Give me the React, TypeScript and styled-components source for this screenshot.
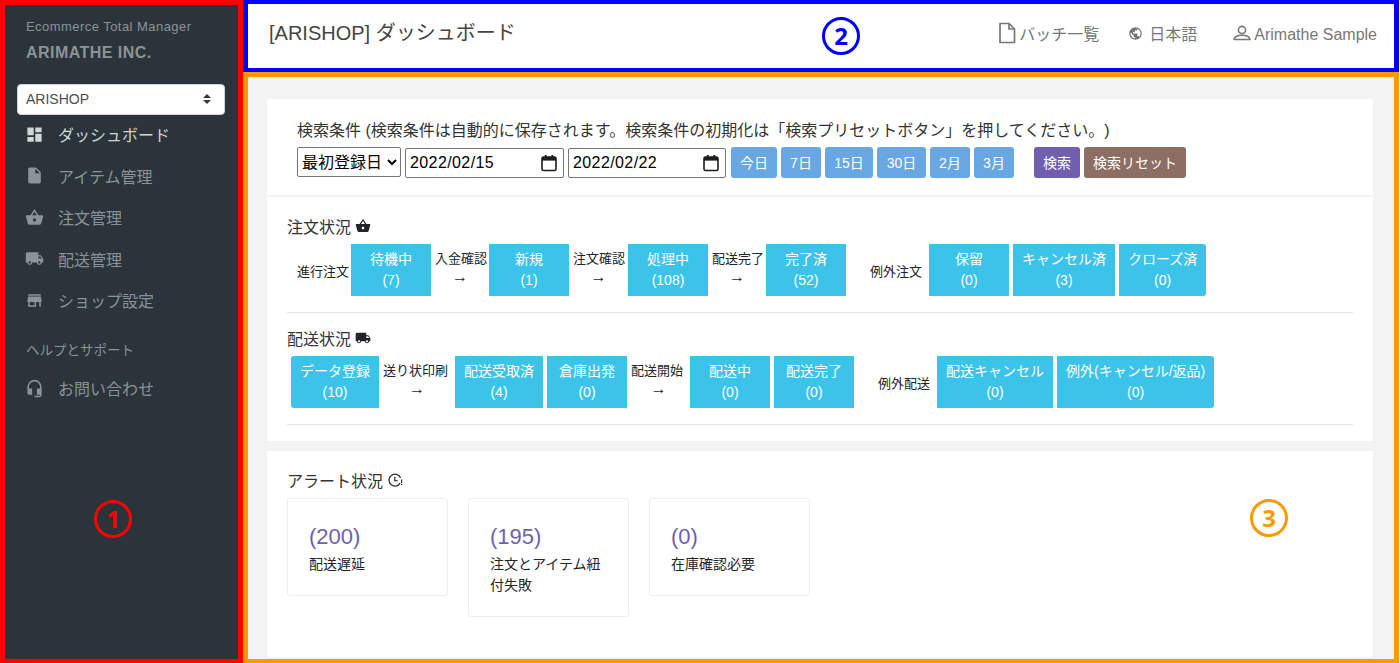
import styled, { createGlobalStyle } from 'styled-components';
import {
  MdDashboard,
  MdInsertDriveFile,
  MdShoppingBasket,
  MdLocalShipping,
  MdStore,
  MdHeadsetMic,
  MdPublic,
} from 'react-icons/md';

const FONT = `"Liberation Sans", "Noto Sans CJK JP", sans-serif`;

const GlobalStyle = createGlobalStyle`
  html, body {
    margin: 0;
    padding: 0;
    background: #fff;
    overflow: hidden;
  }
  * {
    box-sizing: border-box;
    text-spacing-trim: space-all;
  }
  body {
    font-family: ${FONT};
  }
`;

const navItems = [
  { label: 'ダッシュボード', icon: <MdDashboard />, active: true },
  { label: 'アイテム管理', icon: <MdInsertDriveFile /> },
  { label: '注文管理', icon: <MdShoppingBasket /> },
  { label: '配送管理', icon: <MdLocalShipping /> },
  { label: 'ショップ設定', icon: <MdStore /> },
];

const quickRanges = [
  { label: '今日', width: 46 },
  { label: '7日', width: 40 },
  { label: '15日', width: 48 },
  { label: '30日', width: 49 },
  { label: '2月', width: 40 },
  { label: '3月', width: 40 },
];

const alerts = [
  { count: 200, label: '配送遅延' },
  { count: 195, label: '注文とアイテム紐付失敗' },
  { count: 0, label: '在庫確認必要' },
];

const CalendarIcon = () => (
  <svg width="18" height="18" viewBox="0 0 18 18" fill="none">
    <rect x="2" y="3" width="14" height="13.5" rx="1.6" stroke="#1c1c1c" strokeWidth="1.6" />
    <rect x="2" y="3" width="14" height="3.6" fill="#1c1c1c" />
    <rect x="4.8" y="1" width="1.8" height="3" fill="#1c1c1c" />
    <rect x="11.4" y="1" width="1.8" height="3" fill="#1c1c1c" />
  </svg>
);

const SelectArrows = () => (
  <svg width="10" height="12" viewBox="0 0 10 12">
    <path d="M5 1 L9 5 H1 Z M5 11 L1 7 H9 Z" fill="#343a40" />
  </svg>
);

const FileOutline = () => (
  <svg width="18" height="22" viewBox="0 0 18 22" fill="none">
    <path d="M2 1.5 H11 L16.5 7 V20.5 H2 Z" stroke="#777" strokeWidth="1.7" strokeLinejoin="round" />
    <path d="M11 1.5 V7 H16.5" stroke="#777" strokeWidth="1.7" strokeLinejoin="round" />
  </svg>
);

const UserOutline = () => (
  <svg width="18" height="16" viewBox="0 0 18 16" fill="none">
    <circle cx="9" cy="5" r="3.6" stroke="#777" strokeWidth="1.6" />
    <path d="M1 14.5 C1.5 11.2 5 10.2 9 10.2 C13 10.2 16.5 11.2 17 14.5 Z" stroke="#777" strokeWidth="1.6" strokeLinejoin="round" />
  </svg>
);

const ClockAlert = () => (
  <svg width="15" height="15" viewBox="0 0 15 15" fill="none">
    <path d="M12.2 10.2 A6 6 0 1 1 12.6 5" stroke="#333" strokeWidth="1.3" />
    <path d="M6.8 4 V7.6 H9.6" stroke="#333" strokeWidth="1.3" />
    <rect x="13" y="6.5" width="1.2" height="3.6" fill="#333" />
    <rect x="13" y="11" width="1.2" height="1.3" fill="#333" />
  </svg>
);

const App = () => {
  return (
    <Page>
      <GlobalStyle />
      <Sidebar>
        <BrandSub>Ecommerce Total Manager</BrandSub>
        <BrandName>ARIMATHE INC.</BrandName>
        <ShopSelect>
          <span>ARISHOP</span>
          <SelectArrows />
        </ShopSelect>
        <NavList>
          {navItems.map((item) => (
            <NavItem key={item.label} $active={item.active}>
              {item.icon}
              {item.label}
            </NavItem>
          ))}
        </NavList>
        <NavCaption>ヘルプとサポート</NavCaption>
        <NavItem>
          <MdHeadsetMic />
          お問い合わせ
        </NavItem>
        <Marker $color="#ff0000" $left="89px" $top="495px">
          1
        </Marker>
      </Sidebar>
      <Content>
        <Header>
          <PageTitle>[ARISHOP] ダッシュボード</PageTitle>
          <HeaderLinks>
            <HeaderLink $gap={3} $after={29}>
              <FileOutline />
              バッチ一覧
            </HeaderLink>
            <HeaderLink $gap={6} $after={36}>
              <MdPublic size={15} />
              日本語
            </HeaderLink>
            <HeaderLink $gap={3}>
              <UserOutline />
              <UserName>Arimathe Sample</UserName>
            </HeaderLink>
          </HeaderLinks>
          <Marker $color="#0000ff" $left="574px" $top="13px">
            2
          </Marker>
        </Header>
        <Main>
          <SearchCard>
            <SearchNote>
              検索条件 (検索条件は自動的に保存されます。検索条件の初期化は「検索プリセットボタン」を押してください。)
            </SearchNote>
            <SearchRow>
              <DateType defaultValue="created">
                <option value="created">最初登録日</option>
              </DateType>
              <DateBox $width={159}>
                2022/02/15
                <CalendarIcon />
              </DateBox>
              <DateBox $width={158}>
                2022/02/22
                <CalendarIcon />
              </DateBox>
              <RangeButtons>
                {quickRanges.map((range) => (
                  <SmallButton key={range.label} $bg="#69a7e3" $width={range.width}>
                    {range.label}
                  </SmallButton>
                ))}
              </RangeButtons>
              <ActionButtons>
                <SmallButton $bg="#6f5fae" $width={46}>
                  検索
                </SmallButton>
                <SmallButton $bg="#8d6e63" $width={102}>
                  検索リセット
                </SmallButton>
              </ActionButtons>
            </SearchRow>
          </SearchCard>
          <StatusCard>
            <StatusTitle>
              注文状況 <MdShoppingBasket size={16} color="#212529" />
            </StatusTitle>
            <StatusRow $indent={10}>
              <RowLabel>進行注文</RowLabel>
              <StatusButton name="待機中" count={7} />
              <StepLabel $w={50}>
                入金確認<Arrow>→</Arrow>
              </StepLabel>
              <StatusButton name="新規" count={1} />
              <StepLabel $w={51}>
                注文確認<Arrow>→</Arrow>
              </StepLabel>
              <StatusButton name="処理中" count={108} />
              <StepLabel $w={50}>
                配送完了<Arrow>→</Arrow>
              </StepLabel>
              <StatusButton name="完了済" count={52} />
              <ExceptionLabel>例外注文</ExceptionLabel>
              <StatusButton name="保留" count={0} />
              <StatusButton name="キャンセル済" count={3} />
              <StatusButton name="クローズ済" count={0} roundRight />
            </StatusRow>
            <Divider />
            <StatusTitle>
              配送状況 <MdLocalShipping size={16} color="#212529" />
            </StatusTitle>
            <StatusRow $indent={4}>
              <StatusButton name="データ登録" count={10} roundLeft />
              <StepLabel $w={68}>
                送り状印刷<Arrow>→</Arrow>
              </StepLabel>
              <StatusButton name="配送受取済" count={4} />
              <StatusButton name="倉庫出発" count={0} />
              <StepLabel $w={55}>
                配送開始<Arrow>→</Arrow>
              </StepLabel>
              <StatusButton name="配送中" count={0} />
              <StatusButton name="配送完了" count={0} />
              <ExceptionLabel>例外配送</ExceptionLabel>
              <StatusButton name="配送キャンセル" count={0} />
              <StatusButton name="例外(キャンセル/返品)" count={0} roundRight />
            </StatusRow>
            <Divider />
          </StatusCard>
          <AlertCard>
            <AlertTitle>
              アラート状況 <ClockAlert />
            </AlertTitle>
            <AlertList>
              {alerts.map((alert) => (
                <AlertBox key={alert.label}>
                  <AlertCount>({alert.count})</AlertCount>
                  <AlertLabel>{alert.label}</AlertLabel>
                </AlertBox>
              ))}
            </AlertList>
            <Marker $color="#ff9900" $left="983px" $top="48px">
              3
            </Marker>
          </AlertCard>
        </Main>
      </Content>
    </Page>
  );
};

const StatusButton = ({
  name,
  count,
  roundLeft,
  roundRight,
}: {
  name: string;
  count: number;
  roundLeft?: boolean;
  roundRight?: boolean;
}) => (
  <StatusBtn $roundLeft={roundLeft} $roundRight={roundRight}>
    <span>{name}</span>
    <span>({count})</span>
  </StatusBtn>
);

export default App;

const Page = styled.div`
  display: flex;
  width: 1399px;
  height: 663px;
  overflow: hidden;
`;

const Marker = styled.div<{ $color: string; $left: string; $top: string }>`
  position: absolute;
  left: ${(props) => props.$left};
  top: ${(props) => props.$top};
  width: 38px;
  height: 38px;
  display: flex;
  align-items: center;
  justify-content: center;
  border: 3.5px solid ${(props) => props.$color};
  border-radius: 50%;
  color: ${(props) => props.$color};
  font-family: 'Open Sans', sans-serif;
  font-size: 24px;
  font-weight: 700;
  line-height: 1;
`;

const Sidebar = styled.aside`
  position: relative;
  flex: 0 0 243px;
  height: 663px;
  padding: 15px 12px 0;
  background: #2a343a;
  border: 5px solid #ff0000;
  border-bottom-width: 4px;
`;

const BrandSub = styled.div`
  padding-left: 9px;
  color: #8b9397;
  font-size: 13px;
  line-height: 14px;
  letter-spacing: 0.45px;
`;

const BrandName = styled.div`
  margin-top: 10px;
  padding-left: 9px;
  color: #8b9397;
  font-size: 16px;
  font-weight: 700;
  line-height: 18px;
  letter-spacing: 0.45px;
`;

const ShopSelect = styled.div`
  display: flex;
  align-items: center;
  justify-content: space-between;
  width: 208px;
  height: 31px;
  margin-top: 22px;
  padding: 0 12px 2px 8px;
  background: #fff;
  border: 1px solid #ced4da;
  border-radius: 4px;
  color: #495057;
  font-size: 14px;
`;

const NavList = styled.nav`
  display: flex;
  flex-direction: column;
  margin-top: -1.5px;
`;

const NavItem = styled.div<{ $active?: boolean }>`
  display: flex;
  align-items: center;
  gap: 14.5px;
  height: 41.5px;
  padding-left: 7.5px;
  color: ${(props) => (props.$active ? '#d3d6d7' : '#8b9397')};
  font-size: 16px;
  svg {
    flex: 0 0 19px;
    width: 19px;
    height: 19px;
  }
`;

const NavCaption = styled.div`
  margin-top: 20px;
  margin-bottom: 6.5px;
  padding-left: 9px;
  color: #8b9397;
  font-size: 13.5px;
  line-height: 20px;
`;

const Content = styled.div`
  flex: 1;
  display: flex;
  flex-direction: column;
  min-width: 0;
`;

const Header = styled.header`
  position: relative;
  display: flex;
  align-items: center;
  justify-content: space-between;
  height: 72px;
  padding: 0 17px 10px 21px;
  background: #fff;
  border: 5px solid #0000ff;
  border-top-width: 4px;
  border-bottom-width: 4px;
`;

const PageTitle = styled.h1`
  margin: 0;
  color: #444;
  font-size: 20px;
  font-weight: 400;
`;

const HeaderLinks = styled.div`
  display: flex;
  align-items: center;
  margin-top: 4px;
`;

const HeaderLink = styled.div<{ $gap: number; $after?: number }>`
  display: flex;
  align-items: center;
  gap: ${(props) => props.$gap}px;
  margin-right: ${(props) => props.$after ?? 0}px;
  color: #777;
  font-size: 16px;
`;

const UserName = styled.span`
  margin-top: 3px;
`;

const Main = styled.main`
  position: relative;
  flex: 1;
  display: flex;
  flex-direction: column;
  padding: 22px 21px 2px 19px;
  background: #f3f3f3;
  border: 5px solid #ff9900;
  border-bottom-width: 4px;
`;

const SearchCard = styled.section`
  height: 96px;
  padding: 22px 30px 0;
  background: #fff;
  border-radius: 3px 3px 0 0;
`;

const SearchNote = styled.div`
  color: #333;
  font-size: 16px;
  line-height: 20px;
`;

const SearchRow = styled.div`
  display: flex;
  align-items: center;
  gap: 4px;
  margin-top: 6px;
`;

const DateType = styled.select`
  width: 104px;
  height: 30px;
  padding: 0;
  margin-top: -1px;
  background: #fff;
  border: 1px solid #767676;
  border-radius: 2px;
  color: #000;
  font-family: ${FONT};
  font-size: 16px;
`;

const DateBox = styled.div<{ $width: number }>`
  display: flex;
  align-items: center;
  justify-content: space-between;
  width: ${(props) => props.$width}px;
  height: 30px;
  padding: 0 5px 0 4px;
  background: #fff;
  border: 1px solid #767676;
  border-radius: 2px;
  color: #000;
  font-size: 16px;
  letter-spacing: 0.4px;
`;

const RangeButtons = styled.div`
  display: flex;
  gap: 4px;
  margin-left: 1px;
`;

const ActionButtons = styled.div`
  display: flex;
  gap: 4px;
  margin-left: 16px;
`;

const SmallButton = styled.button<{ $bg: string; $width: number }>`
  width: ${(props) => props.$width}px;
  height: 31px;
  padding: 0 0 2px;
  background: ${(props) => props.$bg};
  border: 0;
  border-radius: 3px;
  color: #fff;
  font-family: ${FONT};
  font-size: 14px;
`;

const StatusCard = styled.section`
  height: 244px;
  margin-top: 2px;
  padding: 19px 20px 0;
  background: #fff;
`;

const StatusTitle = styled.div`
  display: flex;
  align-items: center;
  gap: 4px;
  height: 20px;
  color: #333;
  font-size: 16px;
`;

const StatusRow = styled.div<{ $indent: number }>`
  display: flex;
  align-items: center;
  gap: 4px;
  height: 52px;
  margin-top: 8px;
  padding-left: ${(props) => props.$indent}px;
`;

const RowLabel = styled.div`
  flex: 0 0 50px;
  min-width: 0;
  color: #212529;
  font-size: 13px;
  white-space: nowrap;
`;

const ExceptionLabel = styled(RowLabel)`
  flex-basis: 55px;
  margin-left: 20px;
`;

const StepLabel = styled.div<{ $w: number }>`
  flex: 0 0 ${(props) => props.$w}px;
  min-width: 0;
  display: flex;
  flex-direction: column;
  align-items: flex-start;
  padding-bottom: 6px;
  color: #212529;
  font-size: 13px;
  line-height: 21px;
  white-space: nowrap;
`;

const Arrow = styled.span`
  align-self: center;
  margin-top: -2px;
  font-size: 16px;
  line-height: 19px;
`;

const StatusBtn = styled.div<{ $roundLeft?: boolean; $roundRight?: boolean }>`
  flex: 0 0 auto;
  display: flex;
  flex-direction: column;
  align-items: center;
  justify-content: center;
  min-width: 80px;
  height: 52px;
  padding: 0 9px;
  background: #3cc3ea;
  border-radius: ${(props) => (props.$roundLeft ? '3px' : '0')} ${(props) => (props.$roundRight ? '3px' : '0')}
    ${(props) => (props.$roundRight ? '3px' : '0')} ${(props) => (props.$roundLeft ? '3px' : '0')};
  color: #fff;
  font-size: 14px;
  line-height: 21.5px;
  white-space: nowrap;
`;

const Divider = styled.hr`
  height: 1px;
  margin: 16px 0 15px;
  background: #e4e4e4;
  border: 0;
`;

const AlertCard = styled.section`
  position: relative;
  flex: 1;
  margin-top: 10px;
  padding: 19px 20px 0;
  background: #fff;
  border-radius: 0 0 3px 3px;
`;

const AlertTitle = styled.div`
  display: flex;
  align-items: center;
  gap: 5px;
  height: 20px;
  color: #333;
  font-size: 16px;
`;

const AlertList = styled.div`
  display: flex;
  align-items: flex-start;
  gap: 20px;
  margin-top: 8px;
`;

const AlertBox = styled.div`
  width: 161px;
  padding: 25px 21px 20px;
  border: 1px solid #eee;
  border-radius: 3px;
`;

const AlertCount = styled.div`
  color: #6f5fae;
  font-size: 22px;
  line-height: 26px;
`;

const AlertLabel = styled.div`
  margin-top: 4px;
  color: #212529;
  font-size: 14px;
  line-height: 21px;
`;
